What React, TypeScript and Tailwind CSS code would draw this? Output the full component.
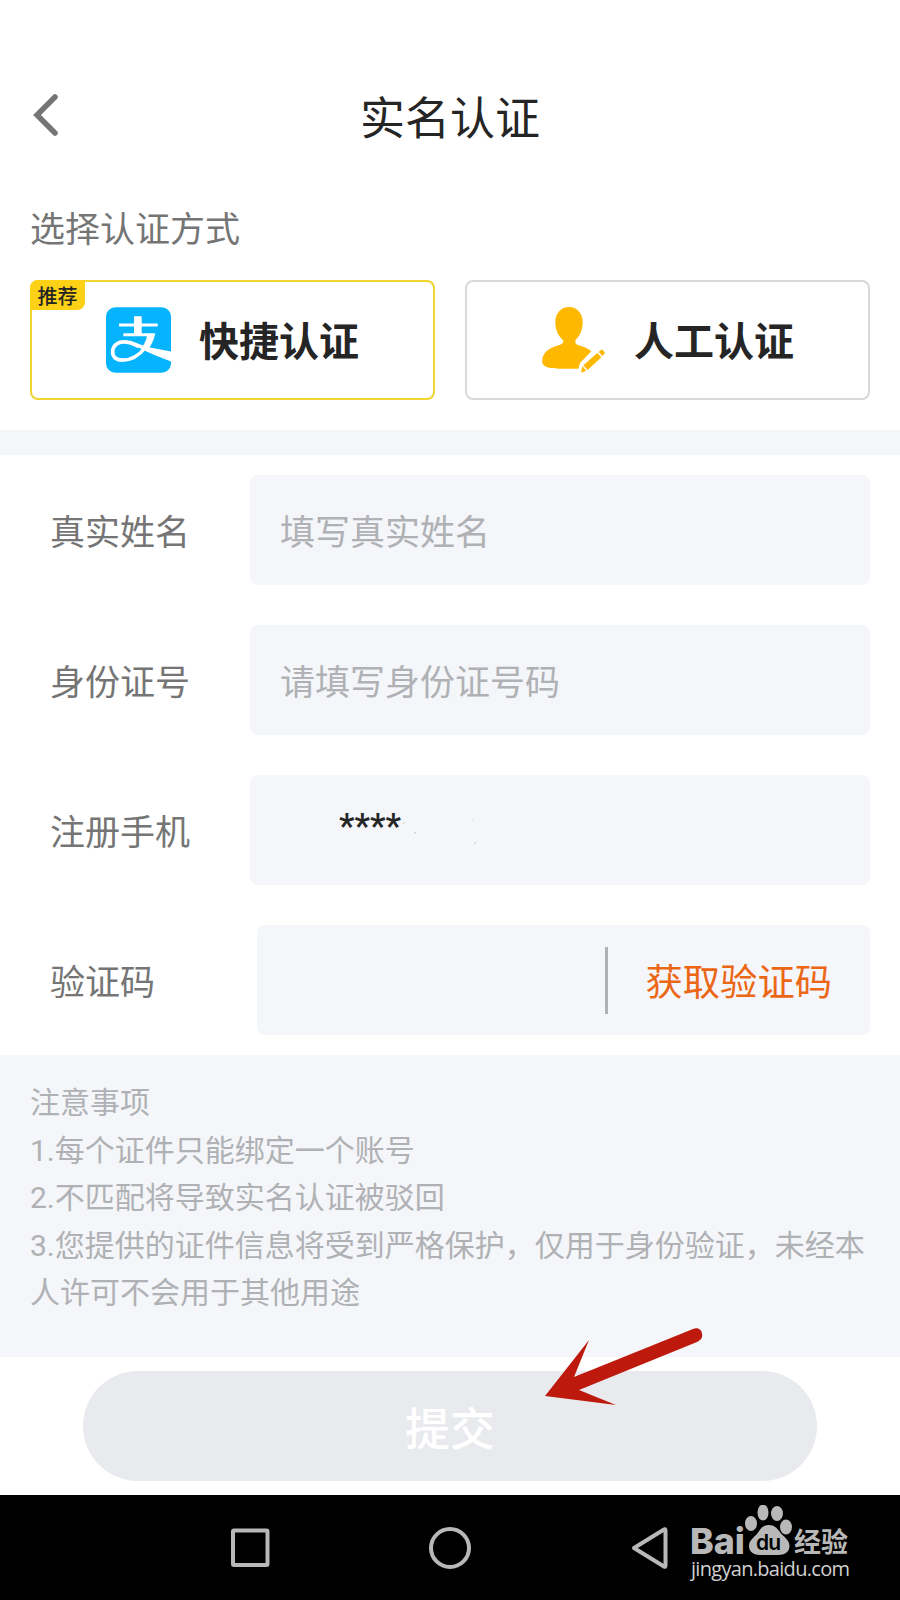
import type { ReactNode } from 'react';

const notes = [
  '注意事项',
  '1.每个证件只能绑定一个账号',
  '2.不匹配将导致实名认证被驳回',
  '3.您提供的证件信息将受到严格保护，仅用于身份验证，未经本人许可不会用于其他用途',
];

const AlipayIcon = () => (
  <svg width="65" height="66" viewBox="0 0 195 197" className="shrink-0">
    <rect width="195" height="197" rx="28" fill="#06b4fd" />
    <g fill="#fff">
      <path d="M84 27h23v22h48v9h-48v20h41c-4 20-12 36-22 49l-18-7c7-10 12-20 15-33H52v-9h32V58H39v-9h45z" />
      <path d="M72 100c18 6 36 15 56 20l67 13v30c-34-12-66-26-96-41-9-5-18-9-27-12z" />
    </g>
    <path
      d="M118 121c-20 26-44 38-69 38-18 0-29-9-29-25 0-17 14-30 34-30 16 0 31 7 45 14"
      fill="none"
      stroke="#fff"
      strokeWidth="11"
    />
  </svg>
);

const ManualIcon = () => (
  <svg width="64" height="66" viewBox="0 0 192 198" className="shrink-0">
    <path d="M81 0c24 0 41 19 41 45 0 23-8 42-21 53-4 12 2 15 13 18 14 4 25 9 34 17l-34 35-5 17H54c-29 0-48-4-53-17-4-29 20-46 49-53 14-4 16-10 12-17-13-10-22-29-22-53C40 19 57 0 81 0z" fill="#ffb800" />
    <path d="M170 135l5-5c3-2 6-2 8 0l4 5c2 3 1 5-1 7l-5 5z M166 138l12 13-41 38-13-14z M121 178l12 13-16 6z" fill="#ffb800" />
  </svg>
);

const Arrow = () => (
  <svg
    width="160"
    height="80"
    viewBox="0 0 160 80"
    className="absolute top-[-30px] left-[545px]"
  >
    <path d="M0 69L44 13 29 50 148 2c5-2 9 1 9 5 1 3-1 6-5 8L34 63l37 15z" fill="#bd190c" />
  </svg>
);

const Watermark = () => (
  <svg width="170" height="88" viewBox="0 0 170 88" className="absolute top-[10px] left-[686px]">
    <g fill="#b8b8b8">
      <text x="4" y="49" fontFamily="Inter" fontSize="36" fontWeight="800" textLength="55" lengthAdjust="spacingAndGlyphs">
        Bai
      </text>
      <ellipse cx="65" cy="18.500" rx="6" ry="7.500" />
      <ellipse cx="77" cy="7.500" rx="5.500" ry="8" />
      <ellipse cx="91" cy="8.500" rx="6" ry="7.500" />
      <ellipse cx="100" cy="22" rx="6" ry="7.500" />
      <path d="M82.500 20c7 0 10 5 13 9 4 4 8 7 8 12 0 6-5 9-11 9H74c-6 0-11-3-11-9 0-5 4-8 8-12 3-4 5-9 11.500-9z" />
      <text x="108" y="47" fontFamily="Noto Sans CJK SC" fontSize="27" fontWeight="700">
        经验
      </text>
    </g>
    <text x="70" y="45" fontFamily="Inter" fontSize="21" fontWeight="600" fill="#000" textLength="25">
      du
    </text>
    <text x="5" y="71" fontFamily="Open Sans" fontSize="20" fill="#d0d0d0" textLength="159">
      jingyan.baidu.com
    </text>
  </svg>
);

const Row = ({ label, children }: { label: string; children: ReactNode }) => (
  <div className="flex h-[110px] items-center justify-between pr-[30px] pl-[50px]">
    <span className="pt-[7px] text-[#757575]">{label}</span>
    {children}
  </div>
);

const Field = ({ children }: { children: ReactNode }) => (
  <div className="flex h-full w-[620px] items-center rounded-lg bg-[#f4f6fa] pt-[7px] pl-[30px] text-[#b0b1b4]">
    {children}
  </div>
);

const App = () => {
  return (
    <div className="flex h-[1600px] w-[900px] flex-col overflow-hidden bg-white font-[Roboto,'Noto_Sans_CJK_SC',sans-serif] text-[35px] leading-none">
      <header className="relative flex h-[196px] items-center justify-center pt-[42px]">
        <svg width="26" height="44" viewBox="0 0 26 44" className="absolute top-[93px] left-[33px]">
          <path d="M22 4L4 22l18 18" fill="none" stroke="#757575" strokeWidth="5.500" strokeLinecap="round" />
        </svg>
        <h1 className="text-[45px] text-[#252525]">实名认证</h1>
      </header>

      <section className="h-[234px] px-[30px]">
        <p className="flex h-[84px] items-start pt-[17px] text-[#757575]">选择认证方式</p>
        <div className="grid h-[120px] grid-cols-2 gap-[30px] text-[40px] font-bold text-[#252525]">
          <button className="relative flex items-center rounded-lg border-2 border-[#efd42f] pl-[74px]">
            <span className="absolute -top-0.5 -left-0.5 flex h-[30px] w-[55px] items-center justify-center rounded-tl-lg rounded-br-lg bg-[#fcd116] pt-[3px] text-[20px] font-medium">
              推荐
            </span>
            <AlipayIcon />
            <span className="ml-[28px] pt-1.5">快捷认证</span>
          </button>
          <button className="flex items-center rounded-lg border-2 border-[#d9d9d9] pl-[75px]">
            <ManualIcon />
            <span className="ml-[28px] pt-1.5">人工认证</span>
          </button>
        </div>
      </section>

      <div className="h-[25px] bg-[#f4f6fa]" />

      <form className="flex h-[600px] flex-col gap-10 py-5">
        <Row label="真实姓名">
          <Field>填写真实姓名</Field>
        </Row>
        <Row label="身份证号">
          <Field>请填写身份证号码</Field>
        </Row>
        <Row label="注册手机">
          <Field>
            <span className="ml-[59px] pb-3.5 font-medium text-[#252525]">****</span>
            <svg width="76" height="28" viewBox="0 0 76 28" stroke="#c4c5c8" className="mb-1">
              <path d="M2 6l2-2M13 16l2-2M72 1v1M73 26l2-2" />
            </svg>
          </Field>
        </Row>
        <Row label="验证码">
          <div className="flex h-full w-[613px] items-center justify-end rounded-lg bg-[#f4f6fa] pr-[38px]">
            <i className="mr-[38px] h-[67px] w-[2.5px] bg-[#b0b1b4]" />
            <span className="pt-2 text-[37.3px] text-[#ec6715]">获取验证码</span>
          </div>
        </Row>
      </form>

      <section className="h-[302px] bg-[#f4f6fa] pt-[24px] pr-[30px] pl-[30px] text-[30px] leading-[47.6px] text-[#b0b1b4]">
        {notes.map((note) => (
          <p key={note}>{note}</p>
        ))}
      </section>

      <section className="relative flex h-[138px] justify-center pt-[14px]">
        <button className="h-[110px] w-[734px] rounded-full bg-[#e9eaed] pt-2 text-[45px] font-medium text-white">
          提交
        </button>
        <Arrow />
      </section>

      <nav className="relative flex h-[105px] items-center bg-black">
        <svg width="440" height="50" viewBox="0 0 440 50" fill="none" stroke="#b8b8b8" strokeWidth="4" className="ml-[230px]">
          <rect x="3" y="7.500" width="34.500" height="34.500" rx="1" />
          <circle cx="220" cy="25" r="19" />
          <path d="M404 25L434 6.500q1.500-1 1.500 1v35q0 2-1.500 1z" strokeLinejoin="round" />
        </svg>
        <Watermark />
      </nav>
    </div>
  );
};

export default App;
